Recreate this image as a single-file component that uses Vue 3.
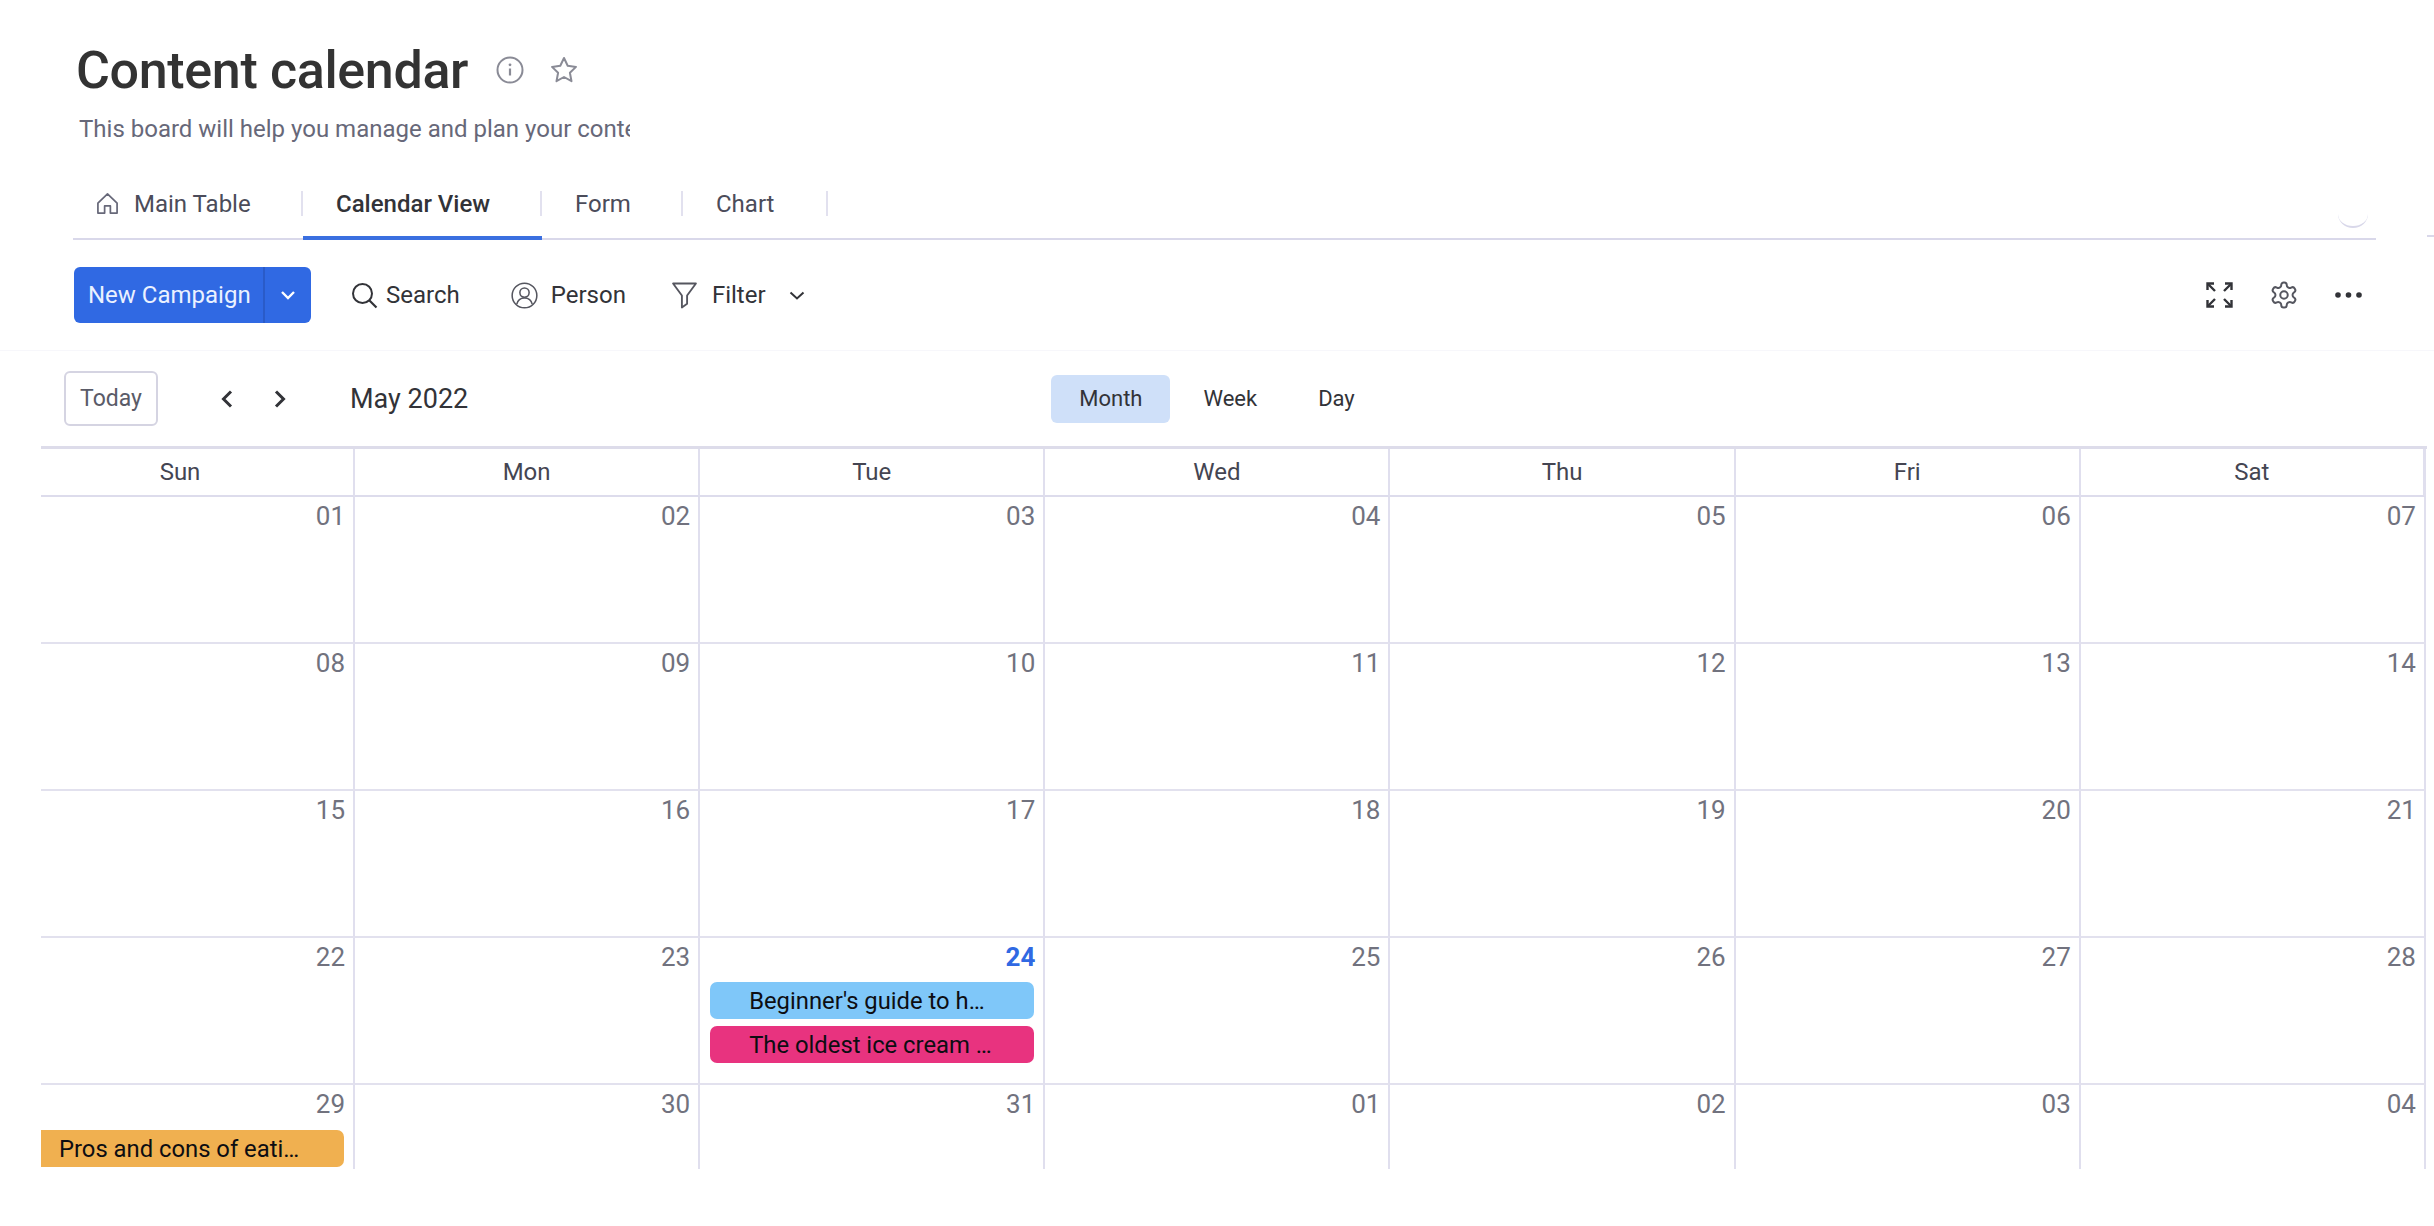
<script setup>
import { ref } from 'vue'

const tabs = [
  { name: 'Main Table', width: 230, pad: 23, home: true },
  { name: 'Calendar View', width: 239, pad: 33, active: true },
  { name: 'Form', width: 141, pad: 33 },
  { name: 'Chart', width: 145, pad: 33 },
]

const views = ['Month', 'Week', 'Day']
const currentView = ref('Month')

const weekDays = ['Sun', 'Mon', 'Tue', 'Wed', 'Thu', 'Fri', 'Sat']

const dayLabels = [
  '01', '02', '03', '04', '05', '06', '07',
  '08', '09', '10', '11', '12', '13', '14',
  '15', '16', '17', '18', '19', '20', '21',
  '22', '23', '24', '25', '26', '27', '28',
  '29', '30', '31', '01', '02', '03', '04',
]

// 24 is today, index in the list above
const todayIndex = 23

const events = {
  23: [
    { title: "Beginner's guide to h…", color: 'blue' },
    { title: 'The oldest ice cream …', color: 'pink' },
  ],
  28: [{ title: 'Pros and cons of eati…', color: 'orange' }],
}
</script>

<template>
  <div class="page">
    <span class="corner-arc"></span>
    <span class="corner-dash"></span>

    <!-- board title -->
    <header class="board-head">
      <div class="title-row">
        <h1 class="title">Content calendar</h1>
        <svg class="info-icon" viewBox="0 0 28 28" fill="none">
          <circle cx="14" cy="14" r="12.5" stroke="#8a8b96" stroke-width="2" />
          <path d="M14 12.5v7" stroke="#8a8b96" stroke-width="2.2" />
          <circle cx="14" cy="8.8" r="1.4" fill="#8a8b96" />
        </svg>
        <svg class="star-icon" viewBox="0 0 28 28" fill="none">
          <path
            d="M14 2l3.7 7.8 8.3 1.1-6.1 5.8 1.6 8.5L14 21l-7.5 4.2 1.6-8.5L2 10.900l8.300-1.100z"
            stroke="#8a8b96"
            stroke-width="2"
            stroke-linejoin="round"
          />
        </svg>
      </div>
      <p class="subtitle">This board will help you manage and plan your content</p>
    </header>

    <!-- tabs -->
    <nav class="tab-bar">
      <div
        v-for="tab in tabs"
        :key="tab.name"
        :class="['tab', { active: tab.active }]"
        :style="{ width: tab.width + 'px' }"
      >
        <div class="tab-inner" :style="{ paddingLeft: tab.pad + 'px' }">
          <svg v-if="tab.home" class="home-icon" viewBox="0 0 24 24" fill="none">
            <path
              d="M2 11.500L12 2l10 9.500V22h-7v-7.500H9V22H2z"
              stroke="#676879"
              stroke-width="1.800"
              stroke-linejoin="round"
            />
          </svg>
          {{ tab.name }}
        </div>
      </div>
    </nav>

    <!-- toolbar -->
    <div class="toolbar">
      <div class="new-button">
        <span class="new-label">New Campaign</span>
        <span class="new-arrow">
          <svg viewBox="0 0 16 10" width="16" height="10" fill="none">
            <path d="M2 2l6 6 6-6" stroke="#fff" stroke-width="2.400" />
          </svg>
        </span>
      </div>
      <div class="tool search">
        <svg class="tool-icon" viewBox="0 0 27 26" fill="none">
          <circle cx="11.500" cy="11" r="9.500" stroke="#323338" stroke-width="2" />
          <path d="M18.500 18l7 7" stroke="#323338" stroke-width="2.200" />
        </svg>
        Search
      </div>
      <div class="tool person">
        <svg class="tool-icon" viewBox="0 0 28 28" fill="none">
          <circle cx="14" cy="14" r="12.800" stroke="#55565f" stroke-width="1.600" />
          <circle cx="14" cy="11" r="4.800" stroke="#55565f" stroke-width="1.600" />
          <path d="M6 23c1-4.500 4-6.500 8-6.500s7 2 8 6.500" stroke="#55565f" stroke-width="1.600" />
        </svg>
        Person
      </div>
      <div class="tool filter">
        <svg class="tool-icon" viewBox="0 0 25 26" fill="none">
          <path d="M1.500 1.500h22L15 13v8l-5 3.500V13z" stroke="#55565f" stroke-width="1.800" stroke-linejoin="round" />
        </svg>
        Filter
        <svg class="filter-arrow" viewBox="0 0 16 9" fill="none">
          <path d="M1.500 1.500L8 7.500l6.500-6" stroke="#323338" stroke-width="2" />
        </svg>
      </div>

      <div class="tool-right">
        <svg class="right-icon" viewBox="0 0 27 26" fill="none">
          <g stroke="#323338" stroke-width="2.400">
            <path d="M2 2l7 7M25 2l-7 7M2 24l7-7M25 24l-7-7" />
            <path d="M1.500 8V1.500H8M19 1.500h6.500V8M1.500 18v6.500H8M19 24.500h6.500V18" />
          </g>
        </svg>
        <svg class="gear-icon" viewBox="0 0 24 24" fill="none" stroke="#55565f" stroke-width="1.600">
          <path
            d="M12.220 2h-.44a2 2 0 0 0-2 2v.18a2 2 0 0 1-1 1.730l-.43.25a2 2 0 0 1-2 0l-.15-.08a2 2 0 0 0-2.730.73l-.22.38a2 2 0 0 0 .73 2.730l.15.1a2 2 0 0 1 1 1.720v.51a2 2 0 0 1-1 1.740l-.15.09a2 2 0 0 0-.73 2.730l.22.38a2 2 0 0 0 2.730.73l.15-.08a2 2 0 0 1 2 0l.43.25a2 2 0 0 1 1 1.730V20a2 2 0 0 0 2 2h.44a2 2 0 0 0 2-2v-.18a2 2 0 0 1 1-1.730l.43-.25a2 2 0 0 1 2 0l.15.08a2 2 0 0 0 2.730-.73l.22-.39a2 2 0 0 0-.73-2.730l-.15-.08a2 2 0 0 1-1-1.740v-.5a2 2 0 0 1 1-1.740l.15-.09a2 2 0 0 0 .73-2.730l-.22-.38a2 2 0 0 0-2.730-.73l-.15.08a2 2 0 0 1-2 0l-.43-.25a2 2 0 0 1-1-1.730V4a2 2 0 0 0-2-2z"
          />
          <circle cx="12" cy="12" r="3" />
        </svg>
        <svg class="dots-icon" viewBox="0 0 27 6" fill="#323338">
          <circle cx="3" cy="3" r="2.800" />
          <circle cx="13.500" cy="3" r="2.800" />
          <circle cx="24" cy="3" r="2.800" />
        </svg>
      </div>
    </div>

    <!-- calendar controls -->
    <div class="calendar-head">
      <button class="today-button">Today</button>
      <svg class="nav-arrow prev" viewBox="0 0 12 18" fill="none">
        <path d="M10 1.500L2.500 9l7.500 7.500" stroke="#323338" stroke-width="3" />
      </svg>
      <svg class="nav-arrow next" viewBox="0 0 12 18" fill="none">
        <path d="M2 1.500L9.500 9 2 16.500" stroke="#323338" stroke-width="3" />
      </svg>
      <span class="month-label">May 2022</span>
      <div class="view-switch">
        <button
          v-for="view in views"
          :key="view"
          :class="['view-button', { active: currentView === view }]"
          @click="currentView = view"
        >
          {{ view }}
        </button>
      </div>
    </div>

    <!-- calendar -->
    <div class="calendar">
      <div v-for="day in weekDays" :key="day" class="week-day">{{ day }}</div>
      <div
        v-for="(label, i) in dayLabels"
        :key="i"
        :class="['day-cell', { 'last-row': i >= 28 }]"
      >
        <span :class="['day-number', { today: i === todayIndex }]">{{ label }}</span>
        <div
          v-for="event in events[i] || []"
          :key="event.title"
          :class="['event', event.color]"
        >
          {{ event.title }}
        </div>
      </div>
    </div>
  </div>
</template>

<style scoped>
.page {
  position: relative;
  width: 2434px;
  height: 1226px;
  overflow: hidden;
  background: #fff;
  color: #323338;
  font-family: Roboto, "Liberation Sans", sans-serif;
}

.corner-arc {
  position: absolute;
  left: 2338px;
  top: 200px;
  width: 30px;
  height: 26px;
  border-bottom: 2px solid #d9d8ea;
  border-radius: 50%;
}

.corner-dash {
  position: absolute;
  left: 2427px;
  top: 235px;
  width: 7px;
  height: 2px;
  background: #d9d8ea;
}

.board-head {
  padding: 35px 0 0 76px;
}

.title-row {
  display: flex;
  align-items: center;
  height: 70px;
}

.title {
  margin: 0;
  font-size: 52px;
  font-weight: 500;
  letter-spacing: -0.35px;
  color: #333;
}

.info-icon {
  width: 28px;
  height: 28px;
  margin-left: 28px;
}

.star-icon {
  width: 28px;
  height: 28px;
  margin-left: 26px;
}

.subtitle {
  width: 551px;
  margin: 8px 0 0 3px;
  overflow: hidden;
  white-space: nowrap;
  font-size: 24px;
  line-height: 32px;
  color: #676879;
}

.tab-bar {
  display: flex;
  height: 47px;
  margin: 46px 58px 0 73px;
  border-bottom: 2px solid #d9d8ea;
}

.tab {
  height: 49px;
  flex-shrink: 0;
  box-sizing: border-box;
  border-bottom: 4px solid transparent;
}

.tab.active {
  border-bottom-color: #3a6fe0;
  font-weight: 500;
}

.tab-inner {
  display: flex;
  align-items: center;
  height: 25px;
  border-right: 2px solid #e2e1ef;
  font-size: 24px;
  color: #4b4c5a;
}

.tab.active .tab-inner {
  color: #323338;
}

.home-icon {
  width: 23px;
  height: 23px;
  margin-right: 15px;
}

.toolbar {
  display: flex;
  align-items: center;
  height: 110px;
  padding: 0 72px 0 74px;
  border-bottom: 1px solid #f7f7fb;
  font-size: 24px;
}

.new-button {
  display: flex;
  width: 237px;
  height: 56px;
  border-radius: 6px;
  background: #3069e3;
  color: #eaf1ff;
}

.new-label {
  display: flex;
  align-items: center;
  box-sizing: border-box;
  width: 191px;
  padding-left: 14px;
  border-right: 2px solid #2a5bc8;
}

.new-arrow {
  display: flex;
  flex: 1;
  align-items: center;
  justify-content: center;
}

.tool {
  display: flex;
  align-items: center;
}

.tool-icon {
  width: 27px;
  height: 27px;
}

.search {
  margin-left: 40px;
  gap: 8px;
}

.person {
  margin-left: 51px;
  gap: 13px;
}

.filter {
  margin-left: 45px;
  gap: 14px;
}

.filter-arrow {
  width: 16px;
  height: 9px;
  margin-left: 9px;
}

.tool-right {
  display: flex;
  align-items: center;
  margin-left: auto;
}

.right-icon {
  width: 27px;
  height: 26px;
}

.gear-icon {
  width: 30px;
  height: 30px;
  margin-left: 36px;
}

.dots-icon {
  width: 27px;
  height: 6px;
  margin-left: 36px;
}

.calendar-head {
  display: flex;
  align-items: center;
  height: 55px;
  margin: 20px 0 0 64px;
}

.today-button {
  width: 94px;
  height: 55px;
  padding: 0;
  border: 2px solid #d5d4e2;
  border-radius: 6px;
  background: #fff;
  color: #5a5b68;
  font: inherit;
  font-size: 23px;
}

.nav-arrow {
  width: 12px;
  height: 18px;
}

.prev {
  margin-left: 63px;
}

.next {
  margin-left: 41px;
}

.month-label {
  margin-left: 64px;
  font-size: 27px;
}

.view-switch {
  display: flex;
  margin-left: 583px;
}

.view-button {
  height: 48px;
  padding: 0 28px;
  border: none;
  border-radius: 6px;
  background: none;
  color: #323338;
  font: inherit;
  font-size: 22px;
}

.view-button + .view-button {
  margin-left: 5px;
}

.view-button.active {
  background: #cfe0f9;
}

.calendar {
  display: grid;
  grid-template-columns: 314px repeat(6, 345.17px);
  grid-template-rows: 48px repeat(4, 147px) 84px;
  width: 2386px;
  height: 720px;
  margin: 20px 0 0 41px;
  border-top: 3px solid #dddcea;
}

.week-day {
  display: flex;
  align-items: center;
  justify-content: center;
  border-right: 2px solid #e0dfee;
  border-bottom: 2px solid #dddcec;
  font-size: 24px;
  color: #444552;
}

.week-day:first-of-type {
  padding-right: 34px;
}

.week-day:nth-of-type(7) {
  border-right-width: 3px;
}

.day-cell {
  min-width: 0;
  padding: 3px 0 0;
  border-right: 2px solid #e0dfee;
  border-bottom: 2px solid #e2e1ee;
  text-align: right;
}

.day-cell.last-row {
  border-bottom: none;
}

.day-number {
  display: block;
  padding-right: 8px;
  font-size: 26px;
  line-height: 32px;
  color: #71727e;
}

.day-number.today {
  color: #3069e3;
  font-weight: 700;
}

.event {
  display: flex;
  align-items: center;
  height: 37px;
  margin: 7px 9px 0 10px;
  padding-left: 39px;
  border-radius: 7px;
  font-size: 23.8px;
  color: #0d0d12;
  text-align: left;
  white-space: nowrap;
  overflow: hidden;
}

.event.blue {
  margin-top: 9px;
  background: #7fc7f9;
}

.event.pink {
  background: #e8337f;
}

.event.orange {
  margin: 10px 9px 0 0;
  padding-left: 18px;
  border-radius: 0 7px 7px 0;
  background: #f0b050;
}
</style>

<style>
html,
body {
  background: #fff;
}
</style>
